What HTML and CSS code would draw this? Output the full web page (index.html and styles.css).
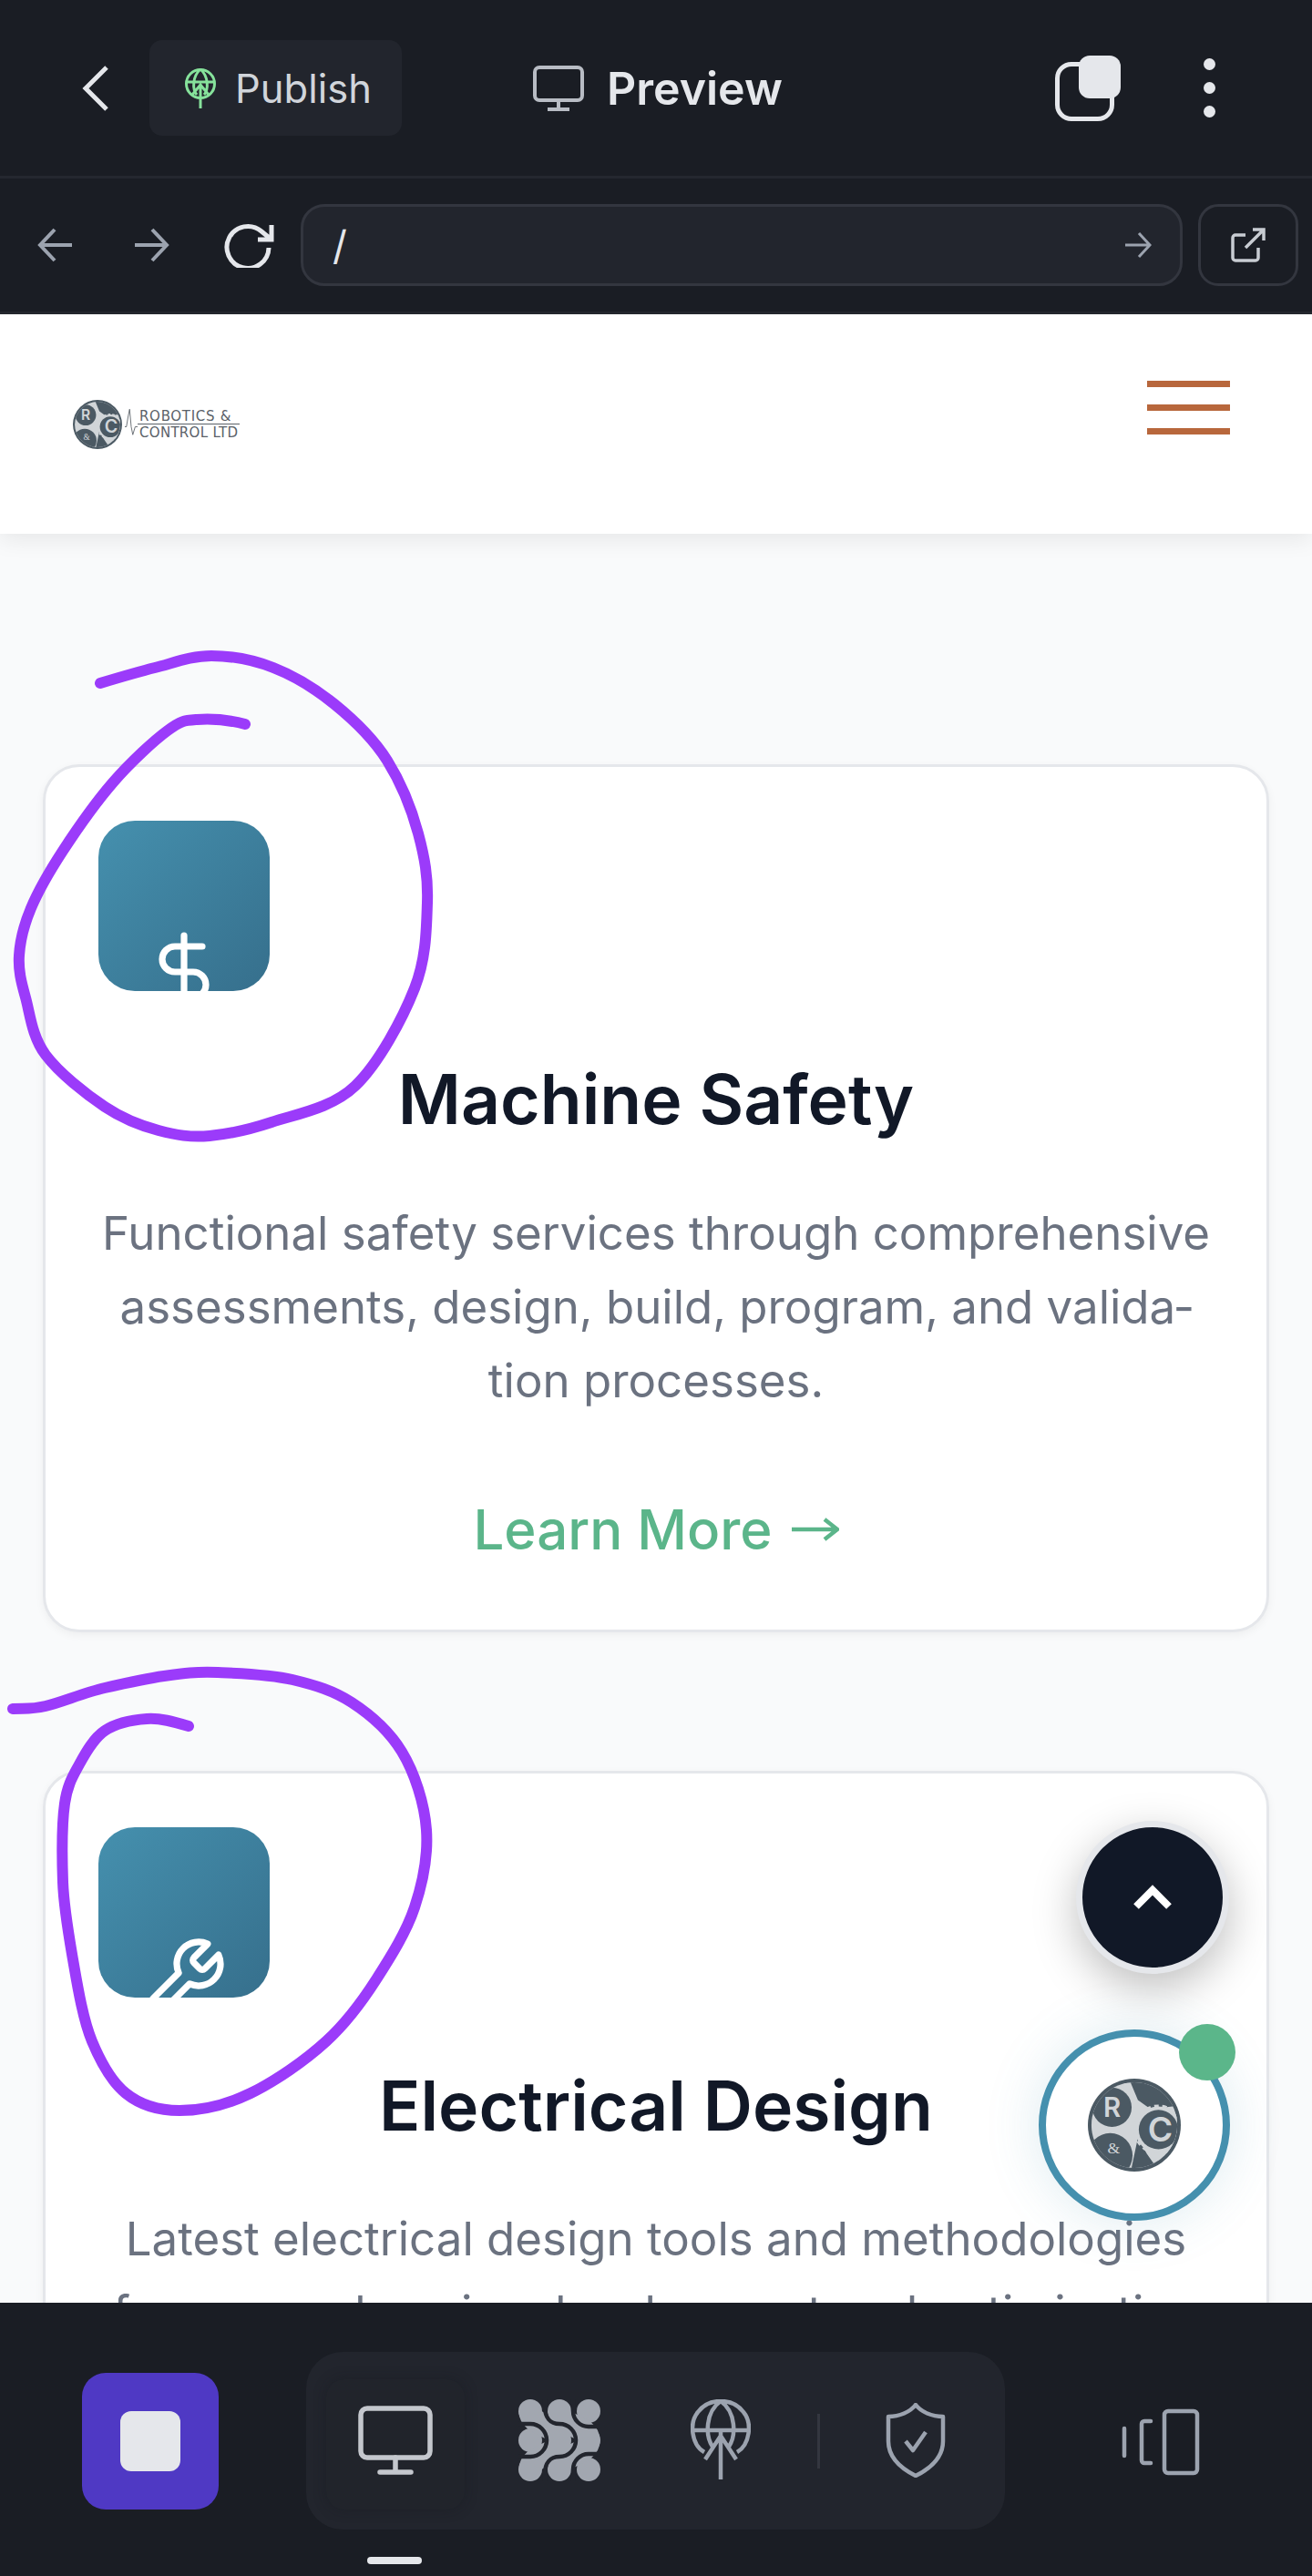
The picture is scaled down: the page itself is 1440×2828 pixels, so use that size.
FILE: index.html
```html
<!DOCTYPE html>
<html lang="en">
<head>
    <meta charset="UTF-8">
    <meta name="viewport" content="width=device-width, initial-scale=1.0">
    <title>Preview</title>
    <link rel="stylesheet" href="styles.css">
</head>
<body>
    <div class="app">
        <!-- Top bar -->
        <div class="topbar">
            <svg class="back-icon" viewBox="0 0 30 52"><path d="M27 3 4 26l23 23"/></svg>
            <div class="publish-btn">
                <svg class="publish-icon" viewBox="0 0 36 46"><circle cx="18" cy="18" r="15.5"/><path d="M3 16h30M18 2c-9 8-9 22-4 28M18 2c9 8 9 22 4 28M18 18v27M9 30l9-11 9 11"/></svg>
                <span>Publish</span>
            </div>
            <div class="preview-title">
                <svg class="monitor-icon" viewBox="0 0 56 50"><rect x="2" y="2" width="52" height="36" rx="5"/><path d="M28 38v10M16 48h24"/></svg>
                <span>Preview</span>
            </div>
            <div class="topbar-right">
                <div class="tabs-icon"><span class="tabs-back"></span><span class="tabs-front"></span></div>
                <div class="dots"><i></i><i></i><i></i></div>
            </div>
        </div>

        <!-- Address bar -->
        <div class="addressbar">
            <svg class="nav-icon dim" viewBox="0 0 40 40"><path d="M38 20H3M19 3 3 20l16 17"/></svg>
            <svg class="nav-icon dim" viewBox="0 0 40 40"><path d="M2 20h35M21 3l16 17-16 17"/></svg>
            <svg class="nav-icon reload" viewBox="0 0 56 50"><path d="M50 28a23 23 0 1 1-8-18l11 9M53 3v16H38"/></svg>
            <div class="url-field">
                <span>/</span>
                <svg class="go-icon" viewBox="0 0 30 30"><path d="M1 15h27M16 2l12 13-12 13"/></svg>
            </div>
            <div class="external-btn">
                <svg viewBox="0 0 38 38"><path d="M30 22v11a3 3 0 0 1-3 3H5a3 3 0 0 1-3-3V11a3 3 0 0 1 3-3h11M24 2h12v12M36 2 16 22"/></svg>
            </div>
        </div>

        <!-- Site preview -->
        <div class="viewport">
            <header class="site-header">
                <div class="logo">
                    <svg class="logo-mark" viewBox="0 0 104 104"><use href="#rc-mark"/></svg>
                    <svg class="logo-pulse" viewBox="0 0 16 40"><path d="M0 24h2l2-12 2-10 2 22 2 10 3-10h3"/></svg>
                    <div class="logo-text">
                        <span class="logo-top">ROBOTICS &amp;</span>
                        <span class="logo-bottom">CONTROL LTD</span>
                    </div>
                </div>
                <div class="burger"><i></i><i></i><i></i></div>
            </header>

            <main class="cards">
                <section class="card">
                    <div class="card-icon">
                        <svg viewBox="0 0 24 24"><path d="M12 2v20M17 5H9.5a3.5 3.5 0 0 0 0 7h5a3.5 3.5 0 0 1 0 7H6"/></svg>
                    </div>
                    <h3>Machine Safety</h3>
                    <p>Functional safety services through comprehensive assessments, design, build, program, and valida&shy;tion processes.</p>
                    <a class="learn-more">
                        <span>Learn More</span>
                        <svg class="arrow" viewBox="0 0 52 28"><path d="M0 14h50M36 3l14 11-14 11"/></svg>
                    </a>
                </section>
                <section class="card">
                    <div class="card-icon">
                        <svg viewBox="0 0 24 24"><path d="M14.7 6.3a1 1 0 0 0 0 1.4l1.6 1.6a1 1 0 0 0 1.4 0l3.77-3.77a6 6 0 0 1-7.94 7.94l-6.91 6.91a2.12 2.12 0 0 1-3-3l6.91-6.91a6 6 0 0 1 7.94-7.94l-3.76 3.76z"/></svg>
                    </div>
                    <h3>Electrical Design</h3>
                    <p>Latest electrical design tools and methodologies for comprehensive development and optimization</p>
                </section>
            </main>

            <button class="to-top">
                <svg viewBox="0 0 44 28"><path d="M4 24 22 6l18 18"/></svg>
            </button>
            <div class="chat-fab">
                <svg class="chat-logo" viewBox="0 0 104 104"><use href="#rc-mark"/></svg>
                <span class="chat-dot"></span>
            </div>
        </div>

        <!-- Bottom bar -->
        <div class="bottombar">
            <div class="stop-btn"><span></span></div>
            <div class="tool-group">
                <div class="tool active">
                    <svg class="tool-monitor" viewBox="0 0 82 76"><rect x="3" y="3" width="76" height="54" rx="7"/><path d="M41 57v16M24 73h34"/></svg>
                </div>
                <div class="tool">
                    <svg class="tool-blobs" viewBox="0 0 90 90">
                        <circle cx="13" cy="13" r="13"/><circle cx="45" cy="13" r="13"/><circle cx="77" cy="13" r="13"/>
                        <circle cx="13" cy="45" r="13"/><circle cx="45" cy="45" r="13"/><circle cx="77" cy="45" r="13"/>
                        <circle cx="13" cy="77" r="13"/><circle cx="45" cy="77" r="13"/><circle cx="77" cy="77" r="13"/>
                        <path class="blob-band" d="M13 13C13 30 45 28 45 45M13 77C13 60 45 62 45 45M45 13C45 30 77 28 77 45M45 77C45 60 77 62 77 45"/>
                        <path class="blob-cut" d="M-2 27H13a18 18 0 0 1 0 36H-2M29 -2V8C29 20 35 27 45 27a18 18 0 0 1 0 36C35 63 29 70 29 82V92M60 -2V13a17 17 0 0 0 17 17H92M60 92V77a17 17 0 0 1 17-17H92"/>
                    </svg>
                </div>
                <div class="tool">
                    <svg class="tool-globe" viewBox="0 0 66 90"><path d="M15 58C1 50-2 26 8 14 20-2 46-2 58 14c10 12 7 36-7 44M2 34h62M33 2C16 14 16 40 24 52M33 2c17 12 17 38 9 50M33 34v54M16 66l17-26 17 26"/></svg>
                </div>
                <span class="tool-sep"></span>
                <div class="tool">
                    <svg class="tool-shield" viewBox="0 0 66 82"><path d="M33 2c6 8 18 13 30 13v27c0 18-14 30-30 38C17 72 3 60 3 42V15C15 15 27 10 33 2Z"/><path d="m22 42 8 10 14-20"/></svg>
                </div>
            </div>
            <svg class="devices-icon" viewBox="0 0 86 74"><rect x="47" y="3" width="36" height="68" rx="4"/><path d="M32 14h-7a3 3 0 0 0-3 3v40a3 3 0 0 0 3 3h7M3 22v30"/></svg>
            <span class="home-bar"></span>
        </div>

        <!-- Marker scribbles on top of the screenshot -->
        <svg class="scribbles" viewBox="0 0 1440 2828">
            <path d="M110 750C130 744 150 738 170 733S210 720 232 720S277 724 300 733S346 756 367 773S410 811 425 835S452 889 459 915S470 963 469 991S468 1052 455 1085S416 1167 390 1192S325 1223 298 1232S251 1245 230 1247S193 1246 174 1241S136 1229 115 1215S65 1178 50 1158S33 1113 28 1095S20 1065 21 1049S26 1016 34 997S54 957 69 934S105 881 124 859S169 813 184 802S202 791 216 790S250 790 269 795"/>
            <path d="M14 1876C26 1875 33 1877 50 1873S93 1858 115 1853S159 1843 180 1840S215 1835 239 1836S296 1838 321 1844S366 1856 386 1869S427 1900 441 1923S466 1980 468 2009S464 2067 455 2094S429 2148 413 2173S381 2220 358 2241S302 2285 275 2298S220 2317 197 2317S154 2311 138 2298S111 2265 101 2241S85 2180 80 2151S70 2094 69 2066S68 2001 71 1980S80 1950 87 1937S103 1908 115 1900S146 1888 161 1887S190 1890 207 1895"/>
        </svg>
    </div>

    <!-- Shared logo mark -->
    <svg class="defs" width="0" height="0">
        <defs>
            <clipPath id="mark-clip"><circle cx="52" cy="52" r="48"/></clipPath>
        </defs>
        <symbol id="rc-mark" viewBox="0 0 104 104">
            <circle class="mark-dark" cx="52" cy="52" r="52"/>
            <circle class="mark-pale" cx="52" cy="52" r="48"/>
            <g clip-path="url(#mark-clip)">
                <path class="mark-dark" d="M46 0H104V30L70 34 56 24ZM48 104 56 66 66 84 80 104Z"/>
                <circle class="mark-dark" cx="27" cy="32" r="22"/>
                <circle class="mark-dark" cx="25" cy="86" r="25"/>
                <circle class="mark-pale mark-teeth" cx="79" cy="57" r="26"/>
                <circle class="mark-dark" cx="79" cy="57" r="22"/>
            </g>
            <text x="27" y="43" class="mark-letter">R</text>
            <text x="81" y="70" class="mark-letter mark-c">C</text>
            <text x="29" y="84" class="mark-amp">&amp;</text>
        </symbol>
    </svg>
</body>
</html>
```

FILE: styles.css
```css
* {
    box-sizing: border-box;
    margin: 0;
    padding: 0;
}

body {
    font-family: Inter, "Liberation Sans", sans-serif;
    background: #1a1d24;
}

.app {
    position: relative;
    width: 1440px;
    height: 2828px;
    display: flex;
    flex-direction: column;
    overflow: hidden;
}

.defs {
    position: absolute;
}

.mark-dark {
    fill: #4b5963;
}

.mark-pale {
    fill: #d1d5d8;
}

.mark-teeth {
    stroke: #d1d5d8;
    stroke-width: 4;
    stroke-dasharray: 5 4;
}

.mark-letter {
    font-family: Inter, sans-serif;
    font-size: 30px;
    font-weight: 600;
    fill: #d1d5d8;
    text-anchor: middle;
}

.mark-c {
    font-size: 38px;
}

.mark-amp {
    font-family: "Liberation Serif", serif;
    font-size: 18px;
    fill: #d1d5d8;
    text-anchor: middle;
}

/* top bar */
.topbar {
    height: 196px;
    flex: none;
    display: flex;
    align-items: center;
    padding-left: 90px;
    background: #1a1d24;
    border-bottom: 3px solid #24272f;
}

.back-icon {
    width: 30px;
    height: 52px;
    margin-right: 44px;
    fill: none;
    stroke: #e5e7eb;
    stroke-width: 5;
}

.publish-btn {
    width: 277px;
    height: 105px;
    display: flex;
    align-items: center;
    gap: 20px;
    padding-left: 38px;
    margin-right: 144px;
    background: #22252d;
    border-radius: 14px;
    color: #d1d5db;
    font-size: 43.5px;
}

.publish-icon {
    width: 36px;
    height: 46px;
    fill: none;
    stroke: #86e29b;
    stroke-width: 3;
}

.preview-title {
    display: flex;
    align-items: center;
    gap: 25px;
    color: #e5e7eb;
    font-size: 50px;
    font-weight: 600;
}

.monitor-icon {
    width: 56px;
    height: 50px;
    fill: none;
    stroke: #b8bcc4;
    stroke-width: 4;
}

.topbar-right {
    margin-left: auto;
    display: flex;
    align-items: center;
    gap: 91px;
    padding-right: 106px;
}

.tabs-icon {
    position: relative;
    width: 72px;
    height: 72px;
}

.tabs-back {
    position: absolute;
    left: 0;
    bottom: 0;
    width: 65px;
    height: 65px;
    border: 5px solid #e5e7eb;
    border-radius: 18px;
}

.tabs-front {
    position: absolute;
    right: 0;
    top: 0;
    width: 46px;
    height: 47px;
    background: #e5e7eb;
    border-radius: 12px;
}

.dots {
    display: flex;
    flex-direction: column;
    gap: 13px;
}

.dots i {
    display: block;
    width: 13px;
    height: 13px;
    background: #e5e7eb;
    border-radius: 50%;
}

/* address bar */
.addressbar {
    height: 149px;
    flex: none;
    display: flex;
    align-items: center;
    padding-left: 41px;
    background: #1a1d24;
    border-bottom: 3px solid #23262d;
}

.nav-icon {
    width: 40px;
    height: 40px;
    fill: none;
    stroke-width: 4;
}

.nav-icon.dim {
    stroke: #9ca3af;
    margin-right: 65px;
}

.nav-icon.reload {
    width: 56px;
    height: 50px;
    margin: 0 29px 0 -6px;
    stroke: #e5e7eb;
    stroke-width: 5;
}

.url-field {
    width: 968px;
    height: 90px;
    display: flex;
    align-items: center;
    justify-content: space-between;
    padding: 0 31px 0 32px;
    margin-right: 17px;
    background: #22252d;
    border: 3px solid #33363f;
    border-radius: 26px;
    color: #e5e7eb;
    font-size: 44px;
}

.go-icon {
    width: 30px;
    height: 30px;
    fill: none;
    stroke: #9ca3af;
    stroke-width: 3;
}

.external-btn {
    width: 110px;
    height: 90px;
    display: flex;
    align-items: center;
    justify-content: center;
    border: 3px solid #33363f;
    border-radius: 22px;
}

.external-btn svg {
    width: 38px;
    height: 38px;
    fill: none;
    stroke: #c8ccd2;
    stroke-width: 3.5;
}

/* preview page */
.viewport {
    position: relative;
    flex: 1;
    min-height: 0;
    overflow: hidden;
    background: #f9fafb;
}

.site-header {
    height: 241px;
    display: flex;
    align-items: center;
    justify-content: space-between;
    padding: 0 90px 0 80px;
    background: #fff;
    box-shadow: 0 6px 24px rgba(0, 0, 0, 0.08);
}

.logo {
    display: flex;
    align-items: center;
}

.logo-mark {
    width: 54px;
    height: 54px;
}

.logo-pulse {
    width: 14px;
    height: 40px;
    margin-left: 3px;
    margin-bottom: 2px;
    fill: none;
    stroke: #5a6168;
    stroke-width: 1;
}

.logo-text {
    display: flex;
    flex-direction: column;
    width: 112px;
    font-family: "DejaVu Sans", sans-serif;
    font-size: 15px;
    line-height: 16px;
    color: #5a6168;
}

.logo-top {
    padding-left: 2px;
    letter-spacing: 0.7px;
    border-bottom: 1px solid #5a6168;
    white-space: nowrap;
}

.logo-bottom {
    padding: 1px 0 0 2px;
    letter-spacing: 0.3px;
    white-space: nowrap;
}

.burger {
    display: flex;
    flex-direction: column;
    gap: 19px;
    width: 91px;
    margin-bottom: 36px;
}

.burger i {
    display: block;
    height: 7px;
    background: #b8673c;
}

.cards {
    display: flex;
    flex-direction: column;
    gap: 152px;
    padding: 253px 47px 0;
}

.card {
    flex: none;
    padding: 59px 58px 74px;
    background: #fff;
    border: 3px solid #e5e7eb;
    border-radius: 40px;
    box-shadow: 0 3px 10px rgba(0, 0, 0, 0.05);
    text-align: center;
}

.card-icon {
    width: 188px;
    height: 187px;
    display: flex;
    justify-content: center;
    padding-top: 118px;
    overflow: hidden;
    border-radius: 40px;
    background: linear-gradient(135deg, #4590ae, #366f8c);
}

.card-icon svg {
    flex: none;
    width: 96px;
    height: 96px;
    fill: none;
    stroke: #fff;
    stroke-width: 1.8;
    stroke-linecap: round;
    stroke-linejoin: round;
}

.card h3 {
    margin-top: 78px;
    font-size: 75px;
    line-height: 1.1;
    font-weight: 600;
    color: #111827;
}

.card p {
    margin-top: 64px;
    font-size: 51px;
    line-height: 81px;
    color: #6b7280;
}

.learn-more {
    display: flex;
    align-items: center;
    justify-content: center;
    gap: 21px;
    margin-top: 87px;
    font-size: 60px;
    font-weight: 500;
    color: #5bb58a;
}

.arrow {
    width: 52px;
    height: 28px;
    fill: none;
    stroke: #5bb58a;
    stroke-width: 4.5;
}

.to-top {
    position: absolute;
    left: 1181px;
    top: 1654px;
    width: 168px;
    height: 168px;
    display: flex;
    align-items: center;
    justify-content: center;
    background: #111827;
    border: 7px solid #e5e7eb;
    border-radius: 50%;
    box-shadow: 0 16px 48px rgba(0, 0, 0, 0.25);
}

.to-top svg {
    width: 44px;
    height: 28px;
    fill: none;
    stroke: #fff;
    stroke-width: 8;
}

.chat-fab {
    position: absolute;
    left: 1140px;
    top: 1883px;
    width: 210px;
    height: 210px;
    display: flex;
    align-items: center;
    justify-content: center;
    background: #fff;
    border: 8px solid #4590ae;
    border-radius: 50%;
    box-shadow: 0 0 60px rgba(69, 144, 174, 0.18);
}

.chat-logo {
    width: 102px;
    height: 102px;
}

.chat-dot {
    position: absolute;
    right: -14px;
    top: -14px;
    width: 62px;
    height: 62px;
    background: #5bb68a;
    border-radius: 50%;
}

/* bottom bar */
.bottombar {
    position: relative;
    height: 300px;
    flex: none;
    display: flex;
    align-items: flex-start;
    padding: 54px 0 0 90px;
    background: #1a1d24;
}

.stop-btn {
    width: 150px;
    height: 150px;
    display: flex;
    align-items: center;
    justify-content: center;
    margin: 23px 96px 0 0;
    background: #4f39c4;
    border-radius: 26px;
}

.stop-btn span {
    width: 66px;
    height: 66px;
    background: #e5e7eb;
    border-radius: 12px;
}

.tool-group {
    flex: none;
    width: 767px;
    height: 195px;
    display: flex;
    align-items: flex-start;
    padding: 30px 0 0 22px;
    background: #22252d;
    border-radius: 40px;
}

.tool {
    flex: none;
    width: 134px;
    height: 143px;
    display: flex;
    align-items: center;
    justify-content: center;
    margin-right: 43px;
    padding-bottom: 10px;
}

.tool.active {
    width: 152px;
    margin-right: 37px;
    background: #21242b;
    border-radius: 20px;
    box-shadow: 0 0 14px rgba(20, 22, 28, 0.35);
}

.tool-monitor {
    width: 82px;
    height: 76px;
    fill: none;
    stroke: #c4c7cd;
    stroke-width: 5.5;
    stroke-linecap: round;
}

.tool-blobs {
    width: 90px;
    height: 90px;
    fill: #a2a7b0;
}

.blob-band {
    fill: none;
    stroke: #a2a7b0;
    stroke-width: 25;
}

.blob-cut {
    fill: none;
    stroke: #22252d;
    stroke-width: 4.5;
}

.tool-globe {
    width: 66px;
    height: 90px;
    fill: none;
    stroke: #9ca3af;
    stroke-width: 4.5;
}

.tool-sep {
    flex: none;
    width: 3px;
    height: 60px;
    margin: 38px 38px 0 -4px;
    background: #33363f;
}

.tool-shield {
    width: 66px;
    height: 82px;
    fill: none;
    stroke: #9ca3af;
    stroke-width: 4.5;
    stroke-linejoin: round;
}

.devices-icon {
    flex: none;
    width: 86px;
    height: 74px;
    margin: 62px 0 0 128px;
    fill: none;
    stroke: #9ca3af;
    stroke-width: 4.5;
    stroke-linecap: round;
}

.home-bar {
    position: absolute;
    left: 403px;
    top: 279px;
    width: 60px;
    height: 8px;
    background: #e5e7eb;
    border-radius: 4px;
}

.scribbles {
    position: absolute;
    left: 0;
    top: 0;
    width: 1440px;
    height: 2828px;
    pointer-events: none;
    fill: none;
    stroke: #9b3bfa;
    stroke-width: 12;
    stroke-linecap: round;
    stroke-linejoin: round;
}
```
